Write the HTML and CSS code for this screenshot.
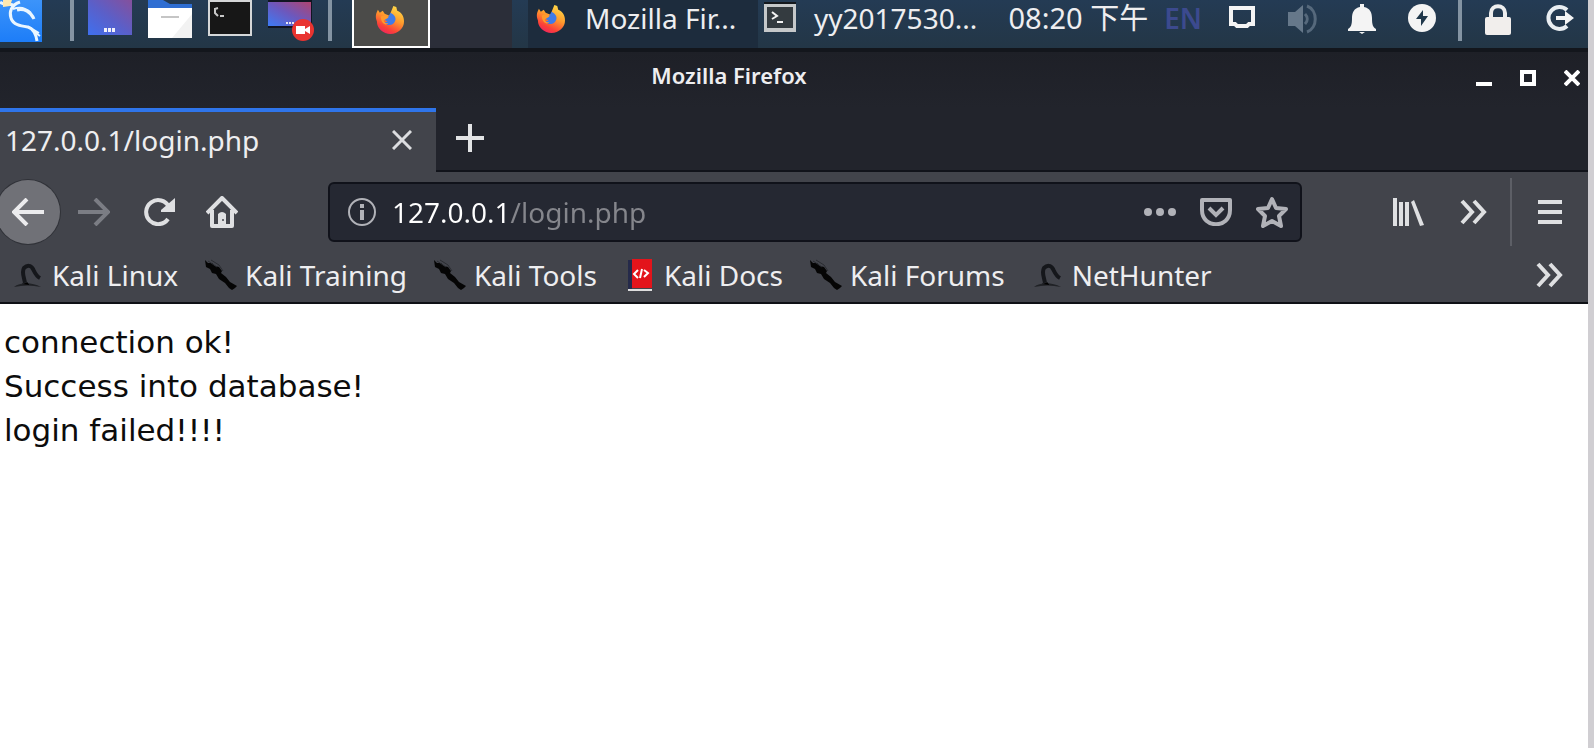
FILE: index.html
```html
<!DOCTYPE html>
<html lang="en">
<head>
<meta charset="utf-8">
<title>Mozilla Firefox</title>
<link rel="stylesheet" href="styles.css">
</head>
<body>
<svg class="defs" width="0" height="0" aria-hidden="true">
  <defs>
    <linearGradient id="wall" x1="0" y1="1" x2="1" y2="0"><stop offset="0" stop-color="#3f70ee"/><stop offset=".5" stop-color="#5b5fc8"/><stop offset="1" stop-color="#85509c"/></linearGradient>
    <linearGradient id="wall2" x1="0" y1="1" x2="1" y2="0"><stop offset="0" stop-color="#3d7bf5"/><stop offset=".5" stop-color="#6c58bd"/><stop offset="1" stop-color="#b04470"/></linearGradient>
    <linearGradient id="kali" x1="0" y1="0" x2="0" y2="1"><stop offset="0" stop-color="#3c94fa"/><stop offset="1" stop-color="#1d7df8"/></linearGradient>
    <linearGradient id="fire" x1=".8" y1="0" x2=".3" y2="1"><stop offset="0" stop-color="#ffe04a"/><stop offset=".45" stop-color="#ff9a2c"/><stop offset=".8" stop-color="#fb4038"/><stop offset="1" stop-color="#ee2460"/></linearGradient>
    <symbol id="firefox" viewBox="0 0 30 30">
      <path fill="url(#fire)" d="M3 5l2 3 3-2 2 3 5 2 2-5 2-5 3 1 1 4c5 2 7 6 7 11a14 13 0 0 1-28 0C0 12 1 9 3 5z"/>
      <path fill="#3f7be8" d="M10 13l4-1 2-4c4 2 6 5 5 8-2 6-8 6-11 2l3-1-4-2z"/>
      <path fill="#ff9a2c" d="M6 12c4-2 7-1 8 1l-5 3c1 3 3 3 5 3-3 3-8 0-8-7z"/>
    </symbol>
    <symbol id="dragon" viewBox="0 0 32 32">
      <path fill="#050505" d="M0 1l3 3 4 0 3 3 4 1 3 4-1 2 5 4 4 5 7 4-2 2-3 2-3-2-4-5-6-4-3-5-4-1-2-4-4-2z"/>
      <path stroke="#2a2c31" stroke-width="1" fill="none" d="M6 1l8 5 4 6M3 2l9 6"/>
    </symbol>
    <symbol id="arch" viewBox="0 0 28 26">
      <path fill="none" stroke="#15171b" stroke-width="4" d="M11 22c0-5-4-11-1-16 3-3 7-3 9 1 2 4 3 7 7 9"/>
      <path fill="#202226" d="M0 25c6-5 18-5 27 0-9-2-18-2-27 0z"/>
      <path stroke="#202226" d="M8 22l5-2 3 3"/>
    </symbol>
    <symbol id="chevrons" viewBox="0 0 28 26"><path fill="none" stroke="currentColor" stroke-width="4" d="M2 2l10 11L2 24M14 2l10 11-10 11"/></symbol>
  </defs>
</svg>
<div class="screen">
  <header class="panel">
    <div class="launchers">
      <button class="icon" aria-label="Applications"><svg width="42" height="42"><rect width="42" height="42" fill="url(#kali)"/><g fill="none" stroke="#eaf6ff"><path stroke-width="3" d="M0 2c4 4 8 1 13 3M17 10c7-2 14 2 17 9"/><path stroke-width="3" d="M20 2c-9 3-11 10-9 16 2 7 10 8 17 9 6 2 8 7 9 14"/><path stroke-width="2" d="M13 9c8-3 14 0 18 4M29 27l10 6M33 31l7 5"/></g><path fill="#ffe9b0" d="M3 0h9l-2 6-7 1z"/></svg></button>
      <span class="bar"></span>
      <button class="icon" aria-label="Show desktop"><svg width="44" height="35"><rect width="44" height="35" fill="url(#wall)"/><path stroke="#f0f0fa" stroke-width="4" stroke-dasharray="3 1" d="M16 30h12"/></svg></button>
      <button class="icon" aria-label="Files"><svg width="44" height="38"><path fill="#2f6ed2" d="M0 0h15l7 4h22v10H0z"/><path fill="#fff" d="M0 8h44v30H0z"/><path fill="#f2f2f2" d="M44 14v24H24z"/><path stroke="#c5c5c5" stroke-width="2" d="M13 17h18"/></svg></button>
      <button class="icon" aria-label="Terminal"><svg width="44" height="36"><rect width="44" height="36" fill="#d5d7d8"/><rect x="2" y="2" width="40" height="32" fill="#171717"/><path fill="none" stroke="#c8c8c8" stroke-width="2" d="M7 8v5l3 3M7 9l3-1M12 16h4"/></svg></button>
      <button class="icon" aria-label="Screen recorder"><svg width="46" height="42"><path fill="#111522" d="M0 0h44v28H0z"/><rect y="2" width="43" height="24" fill="url(#wall2)"/><path stroke="#e8e8f6" stroke-width="2" stroke-dasharray="2 1" d="M18 23h8"/><circle cx="35" cy="30" r="11" fill="#e93430"/><path fill="#fff" d="M28 26h9v3l5-3v8l-5-3v3h-9z"/></svg></button>
      <span class="bar"></span>
    </div>
    <button class="workspace" aria-label="Workspace 1"><svg width="29" height="29"><use href="#firefox"/></svg></button>
    <button class="workspace other" aria-label="Workspace 2"></button>
    <button class="task current"><svg width="29" height="29"><use href="#firefox"/></svg>Mozilla Fir...</button>
    <button class="task"><svg width="32" height="30"><rect width="32" height="30" fill="#14181d"/><rect y="2" width="32" height="28" fill="#c5c8ca"/><rect x="3" y="5" width="26" height="21" fill="#343b40"/><path fill="none" stroke="#f3f3f3" stroke-width="2" d="M8 10l5 4-5 3M13 20h6"/></svg>yy2017530...</button>
    <div class="tray">
      <time class="clock">08:20 下午</time>
      <span class="lang">EN</span>
      <button class="icon" aria-label="Display"><svg width="28" height="24"><path fill="none" stroke="#f4f4f4" stroke-width="4" d="M3 4h22v16h-4l-2 2H9l-2-2H3z"/></svg></button>
      <button class="icon volume" aria-label="Volume"><svg width="30" height="30"><g fill="#66788a"><path d="M0 8h7l8-7v28l-8-7H0z"/></g><g fill="none" stroke="#56697c" stroke-width="3"><path d="M17 10c3 3 3 7 0 10M19 2c11 4 11 22 0 26"/></g></svg></button>
      <button class="icon" aria-label="Notifications"><svg width="28" height="30"><path fill="#f4f4f4" d="M12 0h4v3c6 1 8 6 8 11 0 7 1 9 4 11v2H0v-2c3-2 4-4 4-11C4 9 6 4 12 3zM11 28h6l-3 2z"/></svg></button>
      <button class="icon" aria-label="Power"><svg width="28" height="28"><circle cx="14" cy="14" r="14" fill="#f4f4f4"/><path fill="#20384b" d="M15 6L8 15h5v7l7-10h-5z"/></svg></button>
      <span class="bar"></span>
      <button class="icon" aria-label="Lock"><svg width="28" height="31"><path fill="none" stroke="#eee" stroke-width="4" d="M7 15V9c0-9 14-9 14 0v6"/><rect x="1" y="13" width="26" height="18" rx="2" fill="#f1eeec"/></svg></button>
      <button class="icon" aria-label="Log out"><svg width="30" height="28"><path fill="none" stroke="#e9eef2" stroke-width="4" d="M23 6a11 11 0 1 0 0 16"/><path fill="#f4f4f4" d="M12 12h9V7l9 7-9 7v-5h-9z"/></svg></button>
    </div>
  </header>
  <div class="titlebar">
    <h1 class="title">Mozilla Firefox</h1>
    <div class="controls">
      <button class="icon" aria-label="Minimize"><svg width="16" height="16"><path fill="#fff" d="M0 12h16v4H0z"/></svg></button>
      <button class="icon" aria-label="Maximize"><svg width="16" height="16"><path fill="none" stroke="#fff" stroke-width="4" d="M2 2h12v12H2z"/></svg></button>
      <button class="icon" aria-label="Close"><svg width="16" height="16"><path stroke="#fff" stroke-width="4" d="M1 1l14 14M15 1L1 15"/></svg></button>
    </div>
  </div>
  <div class="tabs">
    <div class="tab"><span>127.0.0.1/login.php</span><button class="icon" aria-label="Close tab"><svg width="20" height="20"><path stroke="#dcdde0" stroke-width="3" d="M1 1l18 18M19 1L1 19"/></svg></button></div>
    <button class="icon newtab" aria-label="New tab"><svg width="28" height="28"><path stroke="#e2e3e5" stroke-width="4" d="M0 14h28M14 0v28"/></svg></button>
  </div>
  <nav class="toolbar" aria-label="Navigation">
    <button class="back" aria-label="Back"><svg width="32" height="28"><path fill="none" stroke="#ececee" stroke-width="4" d="M32 14H3M15 1L2 14l13 13"/></svg></button>
    <button class="icon forward" aria-label="Forward"><svg width="32" height="28"><path fill="none" stroke="#7b7d84" stroke-width="4" d="M0 14h29M17 1l13 13-13 13"/></svg></button>
    <button class="icon reload" aria-label="Reload"><svg width="32" height="28"><path fill="none" stroke="#dfe0e2" stroke-width="4" d="M25 9A12 12 0 1 0 24 21"/><path fill="#dfe0e2" d="M31 0v14H17v-2z"/></svg></button>
    <button class="icon home" aria-label="Home"><svg width="32" height="32"><path fill="none" stroke="#dfe0e2" stroke-width="4" stroke-linejoin="round" d="M1 17L16 2l15 15M6 14v16h20V14"/><path fill="#dfe0e2" d="M12 18q4-4 8 0v13h-8z"/><circle cx="17" cy="24" r="1" fill="#42444b"/></svg></button>
    <div class="urlbar">
      <button class="icon" aria-label="Site information"><svg width="28" height="28"><circle cx="14" cy="14" r="13" fill="none" stroke="#b1b2b8" stroke-width="2"/><path fill="#b1b2b8" d="M12 6h4v4h-4zM12 12h4v10h-4z"/></svg></button>
      <input class="url" type="text" value="127.0.0.1/login.php" aria-label="Address">
      <button class="icon" aria-label="Page actions"><svg width="32" height="8"><g fill="#b1b2b8"><circle cx="4" cy="4" r="4"/><circle cx="16" cy="4" r="4"/><circle cx="28" cy="4" r="4"/></g></svg></button>
      <button class="icon" aria-label="Save to Pocket"><svg width="32" height="28"><path fill="none" stroke="#b1b2b8" stroke-width="4" stroke-linejoin="round" d="M2 2h28v10c0 19-28 19-28 0z"/><path fill="none" stroke="#b1b2b8" stroke-width="4" d="M9 10l7 7 7-7"/></svg></button>
      <button class="icon" aria-label="Bookmark this page"><svg width="32" height="32"><path fill="none" stroke="#b1b2b8" stroke-width="4" stroke-linejoin="round" d="M16 3l4 9 10 1-7 7 2 10-9-5-9 5 2-10-7-7 10-1z"/></svg></button>
    </div>
    <div class="tools">
      <button class="icon" aria-label="Library"><svg width="31" height="28"><path fill="#dfe0e2" d="M0 0h4v28H0zM6 4h4v24H6zM12 4h4v24h-4zM18 4l3-2 10 25-4 1z"/></svg></button>
      <button class="icon" aria-label="More tools"><svg width="28" height="26"><use href="#chevrons"/></svg></button>
      <span class="divider"></span>
      <button class="icon" aria-label="Menu"><svg width="24" height="24"><path stroke="#dfe0e2" stroke-width="4" d="M0 2h24M0 12h24M0 22h24"/></svg></button>
    </div>
  </nav>
  <nav class="bookmarks" aria-label="Bookmarks">
    <a href="#"><svg width="32" height="26"><use href="#arch"/></svg>Kali Linux</a>
    <a href="#"><svg width="32" height="32"><use href="#dragon"/></svg>Kali Training</a>
    <a href="#"><svg width="32" height="32"><use href="#dragon"/></svg>Kali Tools</a>
    <a href="#"><svg width="32" height="32"><path fill="#252a4a" d="M4 1h4v29H4z"/><path fill="#e3141b" d="M8 0h20v29H8z"/><path fill="#dedede" d="M4 30h24v2H4z"/><path fill="none" stroke="#fff" stroke-width="2" d="M14 11l-4 4 4 4M18 10l-2 9M20 11l4 3-4 4"/></svg>Kali Docs</a>
    <a href="#"><svg width="32" height="32"><use href="#dragon"/></svg>Kali Forums</a>
    <a href="#"><svg width="32" height="26"><use href="#arch"/></svg>NetHunter</a>
    <button class="icon overflow" aria-label="More bookmarks"><svg width="28" height="26"><use href="#chevrons"/></svg></button>
  </nav>
  <main class="page">connection ok!<br>Success into database!<br>login failed!!!!</main>
</div>
</body>
</html>
```
FILE: styles.css
```css
* { box-sizing: border-box; }
body {
  margin: 0;
  background: #d0ced2;
  font-family: "Noto Sans", "Noto Sans CJK SC", sans-serif;
  font-size: 28px;
  line-height: 36px;
  color: #eeeef0;
}
.defs { position: absolute; }
svg { display: block; flex: none; }
button {
  margin: 0;
  padding: 0;
  border: 0;
  background: none;
  font: inherit;
  color: inherit;
}
.screen {
  display: flex;
  flex-direction: column;
  min-height: 100vh;
  margin-right: 6px;
  background: #fff;
}
.icon { flex: none; color: #dfe0e2; }

.panel {
  display: flex;
  height: 52px;
  background: linear-gradient(#243b54, #233646);
  border-bottom: 4px solid #13161c;
}
.launchers { display: flex; align-items: flex-start; gap: 16px; width: 352px; flex: none; }
.launchers .bar:first-of-type { margin: 0 -2px 0 12px; }
.launchers .bar:last-child { margin-left: -2px; }
.bar { width: 4px; height: 41px; background: #8494a3; flex: none; }
.workspace {
  display: flex;
  align-items: flex-start;
  justify-content: center;
  width: 78px;
  padding: 5px 4px 0 0;
  border: 2px solid #fff;
  border-top: 0;
  background: #4b4b49;
  flex: none;
}
.other { width: 82px; border: 0; background: #2b2e39; margin-right: 16px; }
.task {
  display: flex;
  align-items: flex-start;
  gap: 18px;
  padding: 0 6px;
  width: 230px;
  white-space: nowrap;
  flex: none;
}
.task svg { margin-top: 2px; }
.current { gap: 20px; background: #1d2c3d; padding-left: 8px; }
.current svg { margin-top: 4px; }
.tray {
  display: flex;
  align-items: flex-start;
  gap: 32px;
  margin-left: auto;
  padding-right: 14px;
}
.clock { margin-right: -16px; white-space: nowrap; font-size: 29px; }
.lang { margin-right: -6px; color: #3c4a8e; font-weight: 600; }
.tray .icon { margin-top: 4px; }
.tray .volume { margin-right: -2px; }
.tray .bar { margin: 0 -10px; }

.titlebar {
  display: flex;
  align-items: center;
  justify-content: center;
  position: relative;
  height: 56px;
  padding: 0 130px 10px 0;
  background: linear-gradient(#1e2027, #22242c);
}
.title { margin: 0; font-size: 22px; line-height: 30px; font-weight: 600; }
.controls { position: absolute; right: 8px; top: 18px; display: flex; gap: 28px; }

.tabs { display: flex; height: 64px; background: #22242c; border-bottom: 2px solid #11131a; }
.tab {
  display: flex;
  align-items: center;
  justify-content: space-between;
  width: 436px;
  margin-bottom: -2px;
  padding: 0 24px 5px 5px;
  background: #42444b;
  border-top: 4px solid #2f75ea;
  flex: none;
}
.newtab { margin-left: 20px; padding-bottom: 2px; }

.toolbar { display: flex; align-items: center; height: 80px; background: #42444b; }
.back {
  display: flex;
  align-items: center;
  justify-content: center;
  width: 64px;
  height: 64px;
  margin-left: -4px;
  border-radius: 50%;
  background: #707177;
  box-shadow: 0 0 0 1px #303238;
  flex: none;
}
.forward { margin-left: 18px; }
.reload { margin-left: 34px; }
.home { margin-left: 30px; }
.urlbar {
  display: flex;
  align-items: center;
  gap: 24px;
  flex: 1;
  height: 60px;
  margin-left: 90px;
  padding: 0 12px 0 18px;
  border: 2px solid #10121a;
  border-radius: 6px;
  background: #252832;
}
.url {
  flex: 1;
  min-width: 0;
  margin-left: -8px;
  padding: 0;
  border: 0;
  outline: 0;
  font: inherit;
  color: transparent;
  background: linear-gradient(to right, #fff 119px, #85868c 119px);
  background-clip: text;
  -webkit-background-clip: text;
}
.tools { display: flex; align-items: center; gap: 36px; padding: 0 26px 0 91px; }
.divider { width: 2px; height: 68px; margin: 0 -10px 0 -14px; background: #5d5f66; }

.bookmarks {
  display: flex;
  align-items: center;
  gap: 27px;
  height: 52px;
  padding: 0 24px 4px 12px;
  background: #42444b;
  border-bottom: 2px solid #0f1116;
}
.bookmarks a {
  display: flex;
  align-items: center;
  gap: 8px;
  white-space: nowrap;
  color: inherit;
  text-decoration: none;
}
.overflow { margin-left: auto; }

.page {
  flex: 1;
  padding: 16px 4px;
  background: #fff;
  color: #0c0c0c;
  font-family: "DejaVu Sans", sans-serif;
  font-size: 31px;
  line-height: 44px;
}
```
